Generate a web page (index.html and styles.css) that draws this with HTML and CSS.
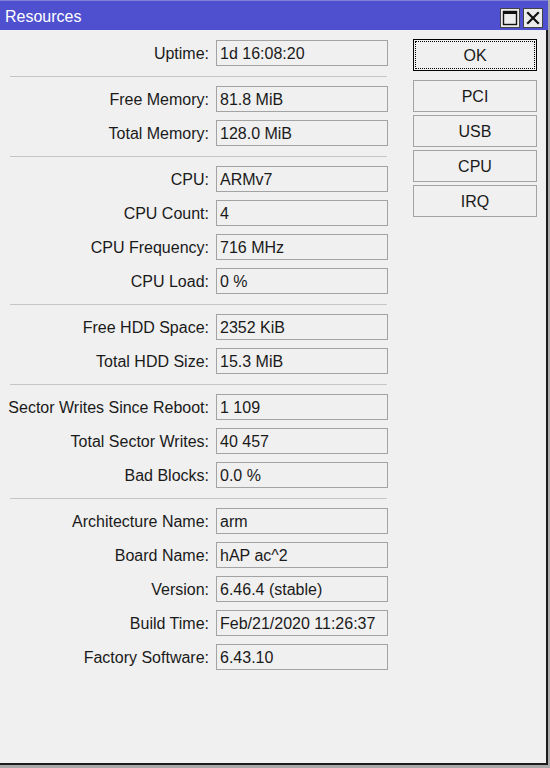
FILE: index.html
```html
<!DOCTYPE html>
<html lang="en">
<head>
    <meta charset="UTF-8">
    <meta name="viewport" content="width=device-width, initial-scale=1.0">
    <title>Resources</title>
    <link rel="stylesheet" href="styles.css">
</head>
<body>

    <div class="window">
        <div class="titlebar">
            <span class="title">Resources</span>
            <div class="controls">
                <div class="ctl">
                    <svg width="16" height="16" viewBox="0 0 16 16">
                        <rect x="1.5" y="1.5" width="13" height="13" fill="none" stroke="#111" stroke-width="1.4"/>
                        <rect x="1" y="1" width="14" height="3" fill="#111"/>
                    </svg>
                </div>
                <div class="ctl">
                    <svg width="16" height="16" viewBox="0 0 16 16">
                        <path d="M3 3 L13 13 M13 3 L3 13" stroke="#111" stroke-width="2.2" stroke-linecap="square"/>
                    </svg>
                </div>
            </div>
        </div>

        <div class="content">
            <div class="form">
                <div class="row"><span class="label">Uptime:</span><span class="field">1d 16:08:20</span></div>
                <div class="sep"></div>
                <div class="row"><span class="label">Free Memory:</span><span class="field">81.8 MiB</span></div>
                <div class="row"><span class="label">Total Memory:</span><span class="field">128.0 MiB</span></div>
                <div class="sep"></div>
                <div class="row"><span class="label">CPU:</span><span class="field">ARMv7</span></div>
                <div class="row"><span class="label">CPU Count:</span><span class="field">4</span></div>
                <div class="row"><span class="label">CPU Frequency:</span><span class="field">716 MHz</span></div>
                <div class="row"><span class="label">CPU Load:</span><span class="field">0 %</span></div>
                <div class="sep"></div>
                <div class="row"><span class="label">Free HDD Space:</span><span class="field">2352 KiB</span></div>
                <div class="row"><span class="label">Total HDD Size:</span><span class="field">15.3 MiB</span></div>
                <div class="sep"></div>
                <div class="row"><span class="label">Sector Writes Since Reboot:</span><span class="field">1 109</span></div>
                <div class="row"><span class="label">Total Sector Writes:</span><span class="field">40 457</span></div>
                <div class="row"><span class="label">Bad Blocks:</span><span class="field">0.0 %</span></div>
                <div class="sep"></div>
                <div class="row"><span class="label">Architecture Name:</span><span class="field">arm</span></div>
                <div class="row"><span class="label">Board Name:</span><span class="field">hAP ac^2</span></div>
                <div class="row"><span class="label">Version:</span><span class="field">6.46.4 (stable)</span></div>
                <div class="row"><span class="label">Build Time:</span><span class="field">Feb/21/2020 11:26:37</span></div>
                <div class="row"><span class="label">Factory Software:</span><span class="field">6.43.10</span></div>
            </div>

            <div class="buttons">
                <button class="btn btn-default">OK</button>
                <div class="btn-group">
                    <button class="btn">PCI</button>
                    <button class="btn">USB</button>
                    <button class="btn">CPU</button>
                    <button class="btn">IRQ</button>
                </div>
            </div>
        </div>
    </div>

</body>
</html>
```

FILE: styles.css
```css
body {
    margin: 0;
    padding: 0;
    background-color: #a9a9a9;
    font-family: "Liberation Sans", Arial, sans-serif;
    font-size: 16px;
    color: #1a1a1a;
}

.window {
    width: 548px;
    height: 765px;
    display: flex;
    flex-direction: column;
}

.titlebar {
    height: 30px;
    box-sizing: border-box;
    background-color: #4f50cf;
    border-top: 1px solid #8080d6;
    display: flex;
    align-items: center;
    justify-content: space-between;
    padding: 0 5px 0 5px;
}

.title {
    color: #fff;
    font-size: 16px;
    margin-top: 3px;
}

.controls {
    display: flex;
    gap: 3px;
    margin-top: 4px;
}

.ctl {
    width: 20px;
    height: 20px;
    box-sizing: border-box;
    background-color: #ececec;
    border: 1px solid #444;
    display: flex;
    align-items: center;
    justify-content: center;
}

.content {
    flex: 1;
    background-color: #f0f0f0;
    border-right: 2px solid #1c1c1c;
    border-bottom: 2px solid #1c1c1c;
    display: flex;
    padding-top: 9px;
}

.form {
    display: flex;
    flex-direction: column;
    gap: 8px;
    margin-top: 1px;
}

.row {
    display: grid;
    grid-template-columns: 209px 172px;
    column-gap: 7px;
    align-items: center;
}

.label {
    text-align: right;
    white-space: nowrap;
    padding-top: 2px;
}

.field {
    height: 26px;
    box-sizing: border-box;
    border: 1px solid #a3a3a3;
    padding-left: 3px;
    line-height: 26px;
    white-space: nowrap;
    overflow: hidden;
}

.sep {
    height: 1px;
    background-color: #c6c6c6;
    margin: 2px 0 1px 10px;
    width: 377px;
}

.buttons {
    margin-left: 25px;
    width: 124px;
    display: flex;
    flex-direction: column;
}

.btn {
    height: 32px;
    width: 124px;
    box-sizing: border-box;
    background-color: #f0f0f0;
    border: 1px solid #a3a3a3;
    font-family: inherit;
    font-size: 16px;
    color: #1a1a1a;
    padding: 2px 0 0 0;
    position: relative;
}

.btn-default {
    border-color: #000;
}

.btn-default::after {
    content: "";
    position: absolute;
    top: 1px;
    left: 1px;
    right: 1px;
    bottom: 1px;
    border: 1px dotted #000;
}

.btn-group {
    margin-top: 9px;
    display: flex;
    flex-direction: column;
    gap: 3px;
}
```
